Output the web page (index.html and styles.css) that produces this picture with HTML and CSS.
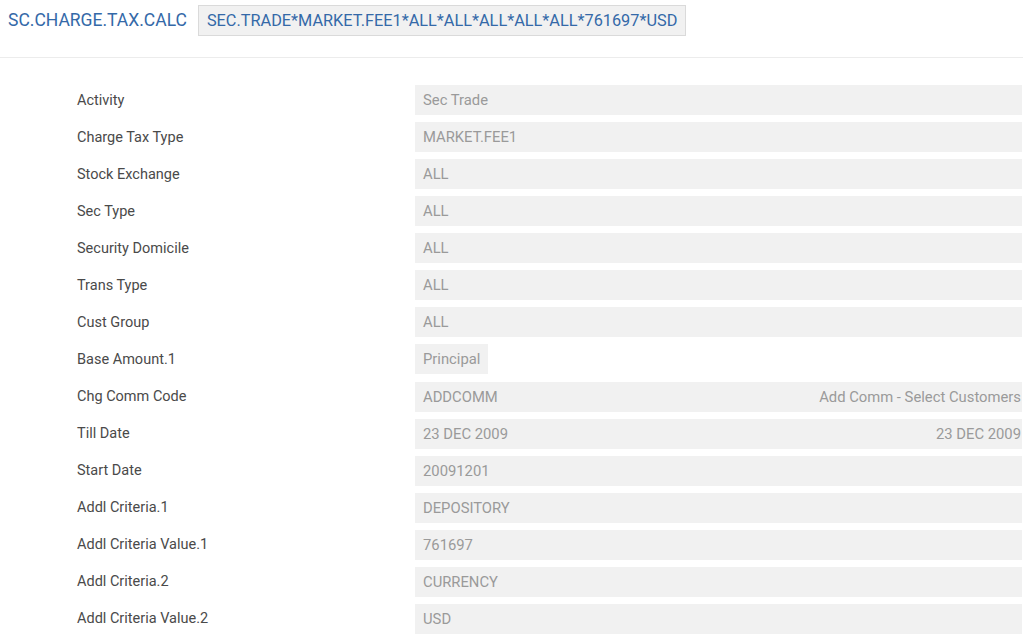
FILE: index.html
```html
<!DOCTYPE html>
<html>
<head>
<meta charset="utf-8">
<link rel="stylesheet" href="styles.css">
</head>
<body>
<header class="head">
  <span class="title">SC.CHARGE.TAX.CALC</span>
  <span class="record-id">SEC.TRADE*MARKET.FEE1*ALL*ALL*ALL*ALL*ALL*761697*USD</span>
</header>
<main class="form">
  <div class="row"><div class="label">Activity</div><div class="value">Sec Trade</div></div>
  <div class="row"><div class="label">Charge Tax Type</div><div class="value">MARKET.FEE1</div></div>
  <div class="row"><div class="label">Stock Exchange</div><div class="value">ALL</div></div>
  <div class="row"><div class="label">Sec Type</div><div class="value">ALL</div></div>
  <div class="row"><div class="label">Security Domicile</div><div class="value">ALL</div></div>
  <div class="row"><div class="label">Trans Type</div><div class="value">ALL</div></div>
  <div class="row"><div class="label">Cust Group</div><div class="value">ALL</div></div>
  <div class="row"><div class="label">Base Amount.1</div><div class="cell"><div class="value value-short">Principal</div></div></div>
  <div class="row"><div class="label">Chg Comm Code</div><div class="value"><span>ADDCOMM</span><span>Add Comm - Select Customers</span></div></div>
  <div class="row"><div class="label">Till Date</div><div class="value"><span>23 DEC 2009</span><span>23 DEC 2009</span></div></div>
  <div class="row"><div class="label">Start Date</div><div class="value">20091201</div></div>
  <div class="row"><div class="label">Addl Criteria.1</div><div class="value">DEPOSITORY</div></div>
  <div class="row"><div class="label">Addl Criteria Value.1</div><div class="value">761697</div></div>
  <div class="row"><div class="label">Addl Criteria.2</div><div class="value">CURRENCY</div></div>
  <div class="row"><div class="label">Addl Criteria Value.2</div><div class="value">USD</div></div>
</main>
</body>
</html>
```
FILE: styles.css
```css
html, body {
  margin: 0;
  padding: 0;
  background: #ffffff;
  font-family: Roboto, "Liberation Sans", Arial, sans-serif;
}

.head {
  display: flex;
  align-items: center;
  gap: 11px;
  height: 58px;
  padding: 5px 0 21px 8px;
  box-sizing: border-box;
  border-bottom: 1px solid #ececec;
}

.title {
  font-size: 17.5px;
  color: #3469a8;
  line-height: 31px;
}

.record-id {
  font-size: 16.3px;
  color: #3469a8;
  background: #f1f1f1;
  border: 1px solid #dadada;
  padding: 0 8px;
  height: 31px;
  line-height: 29px;
  box-sizing: border-box;
}

.form {
  display: flex;
  flex-direction: column;
  gap: 7.07px;
  padding: 27px 1px 0 77px;
}

.row {
  display: grid;
  grid-template-columns: 338px 1fr;
  align-items: center;
  height: 30px;
}

.label {
  font-size: 14.5px;
  color: #4a4a4a;
}

.value {
  display: flex;
  justify-content: space-between;
  align-items: center;
  height: 30px;
  padding: 0 1px 0 8px;
  background: #f1f1f1;
  font-size: 14.8px;
  color: #9a9a9a;
  box-sizing: border-box;
}

.cell {
  display: flex;
}

.value-short {
  padding: 0 8px;
}
```
